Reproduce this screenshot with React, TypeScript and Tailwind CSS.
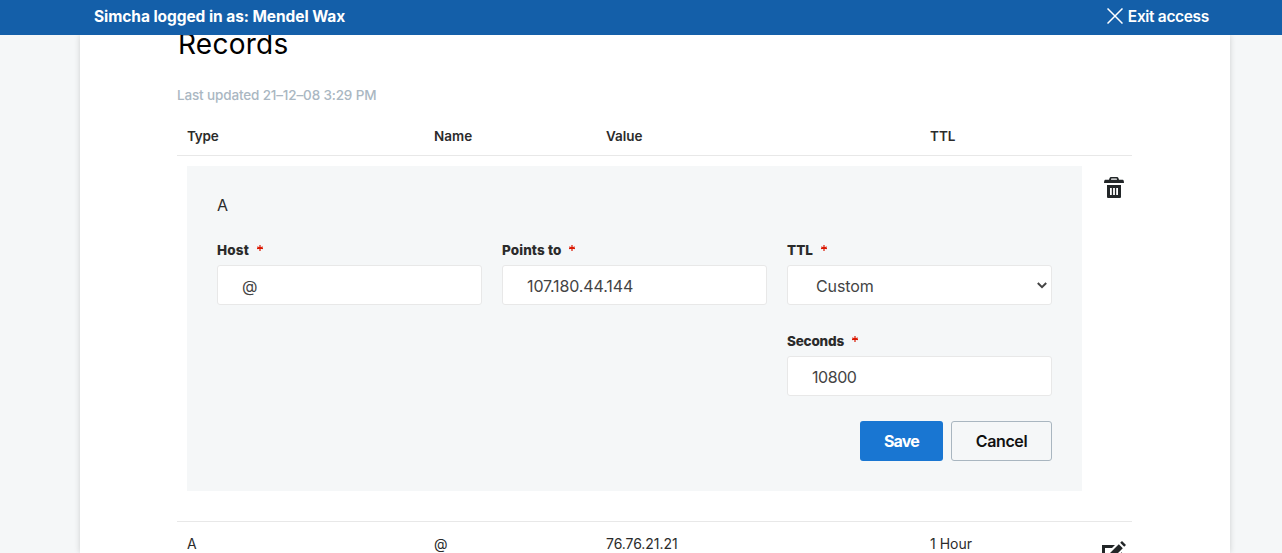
import React from "react";

const COLUMNS = "grid grid-cols-[247px_172px_324px_172px_1fr] pl-[10px]";

function Required() {
  return (
    <svg className="mb-[5px] ml-2 h-[6px] w-[6px]" viewBox="0 0 6 6" stroke="#db1802">
      <path d="M3 0v6M0 2l6 1.6M6 2L0 3.6" strokeWidth="1.2" />
    </svg>
  );
}

function Label({ htmlFor, className, children }: { htmlFor: string; className: string; children: string }) {
  return (
    <label htmlFor={htmlFor} className="flex h-5 items-center text-[13.5px] leading-5 font-extrabold text-[#2b2b2b]">
      <span className={className}>{children}</span>
      <Required />
    </label>
  );
}

function TextField({ id, value, className }: { id: string; value: string; className: string }) {
  return (
    <input
      id={id}
      defaultValue={value}
      className={`mt-[5px] block h-10 w-[265px] rounded-[3px] border border-[#e8e8e8] bg-white pt-px pl-6 text-base text-[#444] outline-none ${className}`}
    />
  );
}

export default function App() {
  return (
    <div className="flex h-[553px] flex-col overflow-hidden bg-[#f5f7f8] font-['Inter',sans-serif] text-[#2b2b2b]">
      <header className="relative z-10 flex h-[35px] shrink-0 items-center justify-between bg-[#145fa9] pr-[73px] pl-[94px] font-bold text-white">
        <span className="pb-0.5 text-[15.5px] tracking-[-0.07px]">Simcha logged in as: Mendel Wax</span>
        <button className="flex items-center gap-[5px]">
          <svg className="mb-[3px] h-4 w-4" viewBox="0 0 16 16" stroke="white" strokeWidth="1.5">
            <path d="M.5.5l15 15M15.5.5l-15 15" />
          </svg>
          <span className="pb-0.5 text-[15.5px] font-semibold tracking-[-0.33px]">Exit access</span>
        </button>
      </header>

      <main className="ml-20 h-[518px] w-[1150px] shrink-0 bg-white pr-[98px] pl-[97px] shadow-[0_0_6px_rgba(0,0,0,0.16)]">
        <div className="-mt-[9px] ml-px h-9 text-[28px] leading-9 tracking-[0.25px] text-black">Records</div>
        <p className="mt-[23px] h-5 text-[13.5px] leading-5 font-medium tracking-[-0.15px] text-[#aab7c2]">Last updated 21–12–08 3:29 PM</p>

        <div className={`${COLUMNS} mt-[15px] h-[36px] border-b border-[#e8e8e8] pt-[6px] text-[13.5px] leading-5 font-semibold`}>
          <span className="tracking-[-0.2px]">Type</span>
          <span>Name</span>
          <span>Value</span>
          <span>TTL</span>
        </div>

        <div className="flex h-[366px] border-b border-[#e8e8e8] pt-2.5 pl-[10px]">
          <form className="h-[325px] w-[895px] shrink-0 bg-[#f5f7f8] px-[30px] pt-[27px]" onSubmit={(e) => e.preventDefault()}>
            <div className="h-6 text-base">A</div>
            <div className="mt-[23px] grid grid-cols-[265px_265px_265px] gap-x-5">
              <div>
                <Label htmlFor="host" className="tracking-[0.2px]">Host</Label>
                <TextField id="host" value="@" className="" />
              </div>
              <div>
                <Label htmlFor="points" className="tracking-[0.1px]">Points to</Label>
                <TextField id="points" value="107.180.44.144" className="tracking-[-0.12px]" />
              </div>
              <div>
                <Label htmlFor="ttl" className="">TTL</Label>
                <button id="ttl" type="button" className="mt-[5px] flex h-10 w-[265px] items-center justify-between rounded-[3px] border border-[#e8e8e8] bg-white pr-1 pl-7 text-base text-[#444]">
                  <span className="pt-px tracking-[-0.1px]">Custom</span>
                  <svg className="h-[7px] w-[10px]" viewBox="0 0 10 7" fill="none" stroke="#444" strokeWidth="2">
                    <path d="M.8 1 5 5.2 9.2 1" />
                  </svg>
                </button>
                <div className="mt-[26px]">
                  <Label htmlFor="seconds" className="tracking-[-0.2px]">Seconds</Label>
                  <TextField id="seconds" value="10800" className="tracking-[-0.45px]" />
                </div>
              </div>
            </div>
            <div className="mt-[25px] flex justify-end gap-2 text-base">
              <button className="h-10 w-[83px] rounded-[3px] bg-[#1976d2] font-bold tracking-[-0.8px] text-white">Save</button>
              <button type="button" className="h-10 w-[101px] rounded-[3px] border border-[#a9b6c0] font-semibold tracking-[-0.4px] text-[#111]">Cancel</button>
            </div>
          </form>
          <button aria-label="Delete" className="mt-[11px] ml-[22px] h-[22px] w-5">
            <svg className="h-[22px] w-5" viewBox="0 0 20 22" fill="#222628">
              <path fillRule="evenodd" d="M7 0h6q1 0 1.4 1l.6 1.8h4q1 .6 1 3.2H0q0-2.6 1-3.2h4L5.6 1Q6 0 7 0ZM7.3 1.5 7 2.8h6l-.3-1.3ZM3 8h14v12q0 1-1 1H4q-1 0-1-1ZM6 11v7h1.8v-7Zm3.1 0v7h1.8v-7Zm3.1 0v7H14v-7Z" />
            </svg>
          </button>
        </div>

        <div className={`${COLUMNS} pt-[12px] text-[14px] leading-5`}>
          <span>A</span>
          <span>@</span>
          <span className="tracking-[-0.06px]">76.76.21.21</span>
          <span>1 Hour</span>
          <svg className="mt-[7px] h-6 w-6" viewBox="0 0 24 24" fill="#222628">
            <path d="M0 4h13l-3 3H3v14h14v-7l3-3v13H0ZM7 13 16.8 3.2l4 4L11 17l-5 1ZM18.2 1.8 20 0l4 4-1.8 1.8Z" />
          </svg>
        </div>
      </main>
    </div>
  );
}
